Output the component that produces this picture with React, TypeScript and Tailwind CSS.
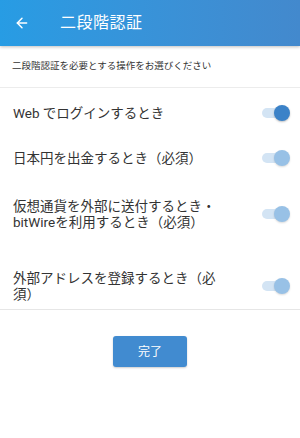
import { ArrowLeft } from "lucide-react";

type Item = { label: string; on: boolean; cls: string };

const ITEMS: Item[] = [
  { label: "Web でログインするとき", on: true, cls: "mt-[17px]" },
  { label: "日本円を出金するとき（必須）", on: false, cls: "mt-[29px]" },
  { label: "仮想通貨を外部に送付するとき・bitWireを利用するとき（必須）", on: false, cls: "mt-[32px]" },
  { label: "外部アドレスを登録するとき（必須）", on: false, cls: "mt-[40px]" },
];

function Toggle({ on }: { on: boolean }) {
  return (
    <div className="relative h-4 w-[30px]">
      <div className="absolute left-[2px] right-[4px] top-[3px] h-[10px] rounded-full bg-[#d3e4f4]" />
      <div
        className={
          on
            ? "absolute right-0 top-0 h-4 w-4 rounded-full bg-[#3b82c8] shadow-[0_1px_2px_rgba(0,0,0,0.25)]"
            : "absolute right-0 top-0 h-4 w-4 rounded-full bg-[#98c1e6] shadow-[0_1px_2px_rgba(0,0,0,0.15)]"
        }
      />
    </div>
  );
}

export default function App() {
  return (
    <div
      className="flex h-[438px] w-[300px] flex-col bg-white text-[#333]"
      style={{ fontFamily: "Roboto, 'Noto Sans CJK JP', sans-serif" }}
    >
      <header className="relative z-10 flex h-[46px] items-center bg-gradient-to-r from-[#279ce4] to-[#4389cd] text-white shadow-[0_1px_3px_rgba(0,0,0,0.25)]">
        <ArrowLeft className="ml-[14px] h-4 w-4" strokeWidth={2.2} />
        <h1 className="ml-[30px] text-[16px] leading-none tracking-[0.5px]">二段階認証</h1>
      </header>

      <div className="flex h-[42px] items-center border-b border-[#ececec] pl-[12px] text-[9.5px] text-[#333]">
        二段階認証を必要とする操作をお選びください
      </div>

      <ul className="flex flex-col border-b border-[#e6e6e6] pb-[7px]">
        {ITEMS.map((it) => (
          <li key={it.label} className={`flex items-center justify-between pl-[13px] pr-[10px] ${it.cls}`}>
            <span className="w-[208px] text-[13.5px] leading-[16px] text-[#333]">{it.label}</span>
            <Toggle on={it.on} />
          </li>
        ))}
      </ul>

      <div className="flex justify-center pt-[26px]">
        <button className="h-[31px] w-[74px] rounded-[3px] bg-[#418bd0] text-[12px] text-white shadow-[0_1px_2px_rgba(0,0,0,0.2)]">
          完了
        </button>
      </div>
    </div>
  );
}
